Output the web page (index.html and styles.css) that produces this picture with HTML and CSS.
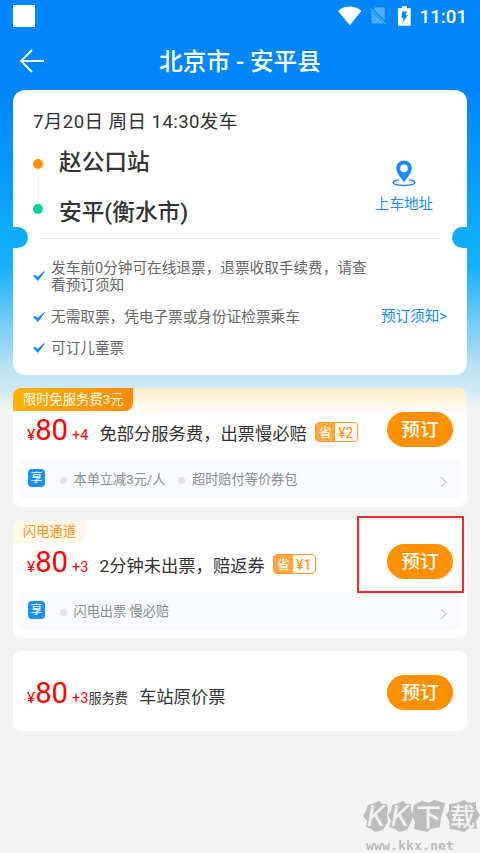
FILE: index.html
```html
<!DOCTYPE html>
<html lang="zh-CN">
<head>
<meta charset="utf-8">
<title>北京市 - 安平县</title>
<link rel="stylesheet" href="styles.css">
</head>
<body>
<div class="screen">
  <header class="status">
    <span class="status-app"></span>
    <svg class="wifi" width="24" height="20" viewBox="0 0 24 20"><path d="M0 4.800C7 -1.200 17 -1.200 24 4.800L12 19.500Z" fill="#fff"/></svg>
    <svg class="sim" width="18" height="19" viewBox="0 0 18 19"><path d="M6.500 1H14.500Q16 1 16 2.500V14.300L4.500 3ZM2.500 5.200L15 17.700H4Q2.500 17.700 2.500 16.200Z" fill="#4facff"/><path d="M1 2L17 18" stroke="#4facff" stroke-width="1.200"/></svg>
    <svg class="battery" width="13" height="20" viewBox="0 0 13 20"><path d="M4 0H9V2H13V20H0V2H4Z" fill="#fff"/><path d="M4 5.500H9.200L7.900 9H10L4.700 16.500L5.600 11.800H3.500Z" fill="#0086fb"/></svg>
    <span class="time">11:01</span>
  </header>
  <nav class="nav">
    <svg class="back" width="26" height="26" viewBox="0 0 26 26"><path d="M13 2L2 13L13 24M2 13H25" fill="none" stroke="#fff" stroke-width="1.800"/></svg>
    <h1>北京市 - 安平县</h1>
  </nav>

  <section class="trip">
    <i class="notch notch-left"></i><i class="notch notch-right"></i>
    <div class="date">7月20日 周日 14:30发车</div>
    <div class="route">
      <div class="line"><i class="dot from"></i><i class="rail"></i><i class="dot to"></i></div>
      <div class="stops"><span>赵公口站</span><span>安平(衡水市)</span></div>
      <div class="place">
        <svg width="24" height="27" viewBox="0 0 24 27"><path fill-rule="evenodd" d="M12 .5C7.500 .5 4.200 3.800 4.200 8.200C4.200 13.200 8.800 17.200 12 22.500C15.200 17.200 19.800 13.200 19.800 8.200C19.800 3.800 16.500 .5 12 .5ZM12 4.600A3.800 3.800 0 1 1 12 12.200A3.800 3.800 0 1 1 12 4.600Z" fill="#218cff"/><path d="M6.600 20C3 20.300 1.200 21.500 1.200 22.600C1.200 24.400 6 25.400 12 25.400S22.800 24.400 22.800 22.600C22.800 21.500 21 20.300 17.400 20" fill="none" stroke="#218cff" stroke-width="1.500"/></svg>
        <span>上车地址</span>
      </div>
    </div>
    <hr>
    <div class="rules">
      <ul>
        <li><svg viewBox="0 0 12 10"><path d="M0 5L1.800 3.700L4.500 6L11.400 0L12 .6L4.900 10Z"/></svg><span>发车前0分钟可在线退票，退票收取手续费，请查<br>看预订须知</span></li>
        <li><svg viewBox="0 0 12 10"><path d="M0 5L1.800 3.700L4.500 6L11.400 0L12 .6L4.900 10Z"/></svg><span>无需取票，凭电子票或身份证检票乘车</span></li>
        <li><svg viewBox="0 0 12 10"><path d="M0 5L1.800 3.700L4.500 6L11.400 0L12 .6L4.900 10Z"/></svg><span>可订儿童票</span></li>
      </ul>
      <a class="notice">预订须知&gt;</a>
    </div>
  </section>

  <section class="ticket promo">
    <div class="tag">限时免服务费3元</div>
    <div class="offer">
      <div class="info"><span class="yen">¥</span><span class="price">80</span><span class="fee">+4</span><span class="name">免部分服务费，出票慢必赔</span></div>
      <div class="save"><b>省</b><span>¥2</span></div>
      <button>预订</button>
    </div>
    <div class="perks"><b class="share">享</b><span class="perk first">本单立减3元/人</span><span class="perk">超时赔付等价券包</span><svg class="chev" width="7" height="12" viewBox="0 0 7 12"><path d="M1 1L6 6L1 11"/></svg></div>
  </section>

  <section class="ticket flash">
    <div class="tag">闪电通道</div>
    <div class="offer">
      <div class="info"><span class="yen">¥</span><span class="price">80</span><span class="fee">+3</span><span class="name">2分钟未出票，赔返券</span></div>
      <div class="save"><b>省</b><span>¥1</span></div>
      <button>预订</button>
    </div>
    <div class="perks"><b class="share">享</b><span class="perk first">闪电出票 慢必赔</span><svg class="chev" width="7" height="12" viewBox="0 0 7 12"><path d="M1 1L6 6L1 11"/></svg></div>
    <i class="marker"></i>
  </section>

  <section class="ticket plain">
    <div class="offer">
      <div class="info"><span class="yen">¥</span><span class="price">80</span><span class="fee">+3</span><span class="service">服务费</span><span class="name">车站原价票</span></div>
      <button>预订</button>
    </div>
  </section>

  <svg class="watermark" width="120" height="58" viewBox="0 0 120 58">
    <g fill="#bdbdbd">
      <path d="M7 7L14 5L18 3L21 6L26 6L27 11L26 17L27 24L22 32L14 34L10 31L5 29L6 23L2 18L5 13Z"/>
      <path d="M31 7L38 5L42 3L45 6L50 6L50 12L52 18L50 24L46 32L38 34L34 31L28 29L30 23L27 17L30 13Z"/>
      <path d="M53 7L61 3L68 5L73 2L84 5L82 13L80 20L79 29L70 31L66 34L53 31L54 24L51 17Z"/>
      <path d="M88 6L96 5L103 2L108 5L115 4L115 11L119 17L115 23L116 31L108 30L103 34L96 32L89 31L88 23L85 17L88 13Z"/>
    </g>
    <g class="wm-title"><text x="6" y="28" class="wm-k">K</text><text x="30" y="28" class="wm-k">K</text><text x="55" y="28">下</text><text x="89" y="28">载</text></g>
    <text class="wm-url" x="5" y="52" textLength="88" lengthAdjust="spacingAndGlyphs">www.kkx.net</text>
  </svg>
</div>
</body>
</html>
```

FILE: styles.css
```css
* { box-sizing: border-box; }
body { margin: 0; background: #f3f3f3; font-family: Roboto, "Noto Sans CJK SC", sans-serif; }
i, b { font-style: normal; font-weight: 400; }
.screen {
  position: relative; width: 480px; height: 853px; overflow: hidden; padding: 0 13px;
  background: linear-gradient(#0086fb 0, #0086fb 90px, #0698fa 165px, #10acfa 235px, #14b0fa 265px, #6fcbf6 320px, #c5e5f3 375px, #cde9f8 388px, #f3f3f3 410px);
}
.status { display: flex; align-items: flex-start; height: 33px; padding-top: 5px; color: #fff; }
.status-app { width: 22px; height: 22px; background: #fff; }
.wifi { margin: 1px 0 0 303px; }
.sim { margin: 1px 0 0 8px; }
.battery { margin: 1px 0 0 11px; }
.time { margin: 2px 0 0 9px; font-size: 18.7px; font-weight: 500; line-height: 20px; }
.nav { display: flex; align-items: center; height: 57px; color: #fff; }
.back { margin: -1px 0 0 6px; }
.nav h1 { flex: 1; margin: 0 32px 0 0; text-align: center; font-size: 23.7px; font-weight: 500; line-height: 30px; }

.trip { position: relative; height: 285px; padding-top: 19px; background: #fff; border-radius: 12px; color: #333; }
.notch { position: absolute; top: 137px; width: 15px; height: 21px; background: #10acfa; }
.notch-left { left: 0; border-radius: 0 11px 11px 0; }
.notch-right { right: 0; border-radius: 11px 0 0 11px; }
.date { margin-left: 20px; font-size: 18.6px; letter-spacing: .4px; line-height: 26px; }
.route { display: flex; height: 102px; }
.line { display: flex; flex-direction: column; align-items: center; width: 10px; margin: 24px 0 0 20px; }
.dot { width: 10px; height: 10px; border-radius: 50%; }
.from { background: #ff9100; }
.to { background: #00cf9a; }
.rail { width: 1px; height: 35px; background: #eee; }
.stops { display: flex; flex-direction: column; flex: 1; gap: 20px; margin: 13px 0 0 16px; font-size: 22.7px; font-weight: 500; line-height: 30px; }
.place { display: flex; flex-direction: column; align-items: center; width: 60px; margin: 25px 33px 0 0; color: #218cff; font-size: 14.6px; line-height: 20px; white-space: nowrap; }
.place span { margin-top: 7px; }
.trip hr { height: 1px; margin: 1px 26px 0; border: 0; background: #eee; }
.rules { display: flex; }
.rules ul { flex: 1; margin: 21px 0 0 20px; padding: 0; list-style: none; color: #666; font-size: 14.65px; line-height: 17px; white-space: nowrap; }
.rules li { display: flex; align-items: center; gap: 6px; margin-bottom: 15px; }
.rules li:nth-child(2) { margin-bottom: 14px; }
.rules li svg { width: 12px; height: 10px; margin-top: -2px; fill: #1388ff; }
.notice { margin: 68px 20px 0 0; color: #1388ff; font-size: 14.6px; line-height: 18px; }

.ticket { position: relative; margin-top: 13px; background: #fff; border-radius: 8px; }
.promo { height: 119px; background: linear-gradient(#ffecca, #fff 28px); }
.flash { height: 118px; }
.plain { height: 80px; padding-top: 23px; }
.tag { height: 23px; padding-left: 10px; font-size: 13.3px; line-height: 24px; }
.promo .tag { width: 120px; color: #fff; background: linear-gradient(100deg, #ffb300, #ff8a00); border-radius: 8px 0 8px 0; }
.flash .tag { width: 72px; color: #ff9416; background: #fff7e8; border-radius: 8px 0 6px 0; line-height: 23px; }
.offer { display: flex; align-items: flex-start; height: 49px; padding-right: 14px; }
.info { display: flex; align-items: baseline; padding: 1px 0 0 14px; color: #333; line-height: 36px; white-space: nowrap; }
.yen, .price, .fee { color: #f00; }
.yen { font-size: 15.5px; }
.price { font-size: 29.3px; }
.fee { margin-left: 4px; font-size: 14.5px; }
.service { font-size: 13.2px; }
.name { margin-left: 11px; font-size: 17.3px; }
.save { display: flex; width: 43px; height: 20px; margin: 11px 0 0 8px; overflow: hidden; border: 1.5px solid #ff9b2b; border-radius: 4px; color: #ff8a00; font-size: 14px; line-height: 20px; text-align: center; }
.save b { width: 19px; background: #ffa73c; color: #fff; font-size: 13px; line-height: 19px; }
.save span { flex: 1; }
.offer button { width: 66px; height: 35px; margin: 1px 0 0 auto; padding: 2px 0 0; border: 0; border-radius: 18px; background: #ff9100; color: #fff; font: 500 18.7px/33px Roboto, "Noto Sans CJK SC", sans-serif; }
.perks { display: flex; align-items: center; height: 39px; margin: 0 7px; padding: 0 13px 0 8px; background: #f8fafd; border-radius: 5px; color: #878d92; font-size: 13.2px; line-height: 20px; white-space: nowrap; }
.share { width: 17px; height: 18px; margin-top: -4px; border-radius: 4px; background: #1890ff; color: #fff; font-size: 12px; line-height: 19px; text-align: center; }
.perk { display: flex; align-items: center; margin: 1px 0 0 13px; }
.perk::before { content: ""; width: 7px; height: 7px; margin-right: 6.5px; border-radius: 50%; background: #e3e3e3; }
.perk.first { margin-left: 15px; }
.chev { margin: 4px 0 0 auto; fill: none; stroke: #ccc; stroke-width: 1.2; }
.marker { position: absolute; left: 344px; top: -4px; width: 107px; height: 77px; border: 2px solid #f42a2a; }

.watermark { position: absolute; left: 361px; top: 798px; }
.wm-title { fill: #f3f3f3; font: 500 25px "Noto Sans CJK SC", sans-serif; }
.wm-k { font: italic 400 29px Roboto, sans-serif; }
.wm-url { fill: #bdbdbd; font: 700 12px "DejaVu Sans Mono", monospace; }
```
